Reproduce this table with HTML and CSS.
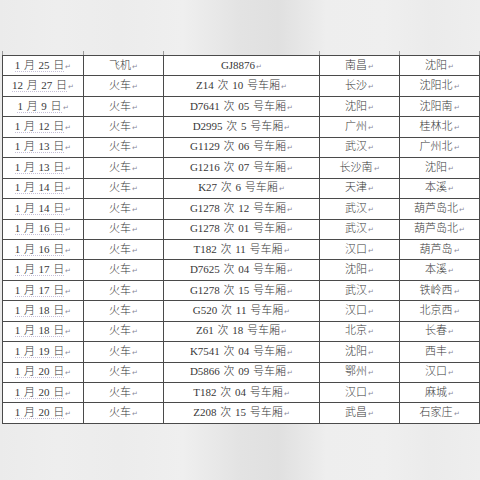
FILE: index.html
```html
<!DOCTYPE html>
<html lang="zh">
<head>
<meta charset="utf-8">
<title>行程表</title>
<link rel="stylesheet" href="styles.css">
</head>
<body>
<div class="page">
<table class="trips">
<colgroup><col class="c-date"><col class="c-mode"><col class="c-no"><col class="c-from"><col class="c-to"></colgroup>
<tbody>
<tr><td><span class="d">1 月 25 日</span><i>↵</i></td><td>飞机<i>↵</i></td><td>GJ8876<i>↵</i></td><td>南昌<i>↵</i></td><td>沈阳<i>↵</i></td></tr>
<tr><td><span class="d">12 月 27 日</span><i>↵</i></td><td>火车<i>↵</i></td><td>Z14 次 10 号车厢<i>↵</i></td><td>长沙<i>↵</i></td><td>沈阳北<i>↵</i></td></tr>
<tr><td><span class="d">1 月 9 日</span><i>↵</i></td><td>火车<i>↵</i></td><td>D7641 次 05 号车厢<i>↵</i></td><td>沈阳<i>↵</i></td><td>沈阳南<i>↵</i></td></tr>
<tr><td><span class="d">1 月 12 日</span><i>↵</i></td><td>火车<i>↵</i></td><td>D2995 次 5 号车厢<i>↵</i></td><td>广州<i>↵</i></td><td>桂林北<i>↵</i></td></tr>
<tr><td><span class="d">1 月 13 日</span><i>↵</i></td><td>火车<i>↵</i></td><td>G1129 次 06 号车厢<i>↵</i></td><td>武汉<i>↵</i></td><td>广州北<i>↵</i></td></tr>
<tr><td><span class="d">1 月 13 日</span><i>↵</i></td><td>火车<i>↵</i></td><td>G1216 次 07 号车厢<i>↵</i></td><td>长沙南<i>↵</i></td><td>沈阳<i>↵</i></td></tr>
<tr><td><span class="d">1 月 14 日</span><i>↵</i></td><td>火车<i>↵</i></td><td>K27 次 6 号车厢<i>↵</i></td><td>天津<i>↵</i></td><td>本溪<i>↵</i></td></tr>
<tr><td><span class="d">1 月 14 日</span><i>↵</i></td><td>火车<i>↵</i></td><td>G1278 次 12 号车厢<i>↵</i></td><td>武汉<i>↵</i></td><td>葫芦岛北<i>↵</i></td></tr>
<tr><td><span class="d">1 月 16 日</span><i>↵</i></td><td>火车<i>↵</i></td><td>G1278 次 01 号车厢<i>↵</i></td><td>武汉<i>↵</i></td><td>葫芦岛北<i>↵</i></td></tr>
<tr><td><span class="d">1 月 16 日</span><i>↵</i></td><td>火车<i>↵</i></td><td>T182 次 11 号车厢<i>↵</i></td><td>汉口<i>↵</i></td><td>葫芦岛<i>↵</i></td></tr>
<tr><td><span class="d">1 月 17 日</span><i>↵</i></td><td>火车<i>↵</i></td><td>D7625 次 04 号车厢<i>↵</i></td><td>沈阳<i>↵</i></td><td>本溪<i>↵</i></td></tr>
<tr><td><span class="d">1 月 17 日</span><i>↵</i></td><td>火车<i>↵</i></td><td>G1278 次 15 号车厢<i>↵</i></td><td>武汉<i>↵</i></td><td>铁岭西<i>↵</i></td></tr>
<tr><td><span class="d">1 月 18 日</span><i>↵</i></td><td>火车<i>↵</i></td><td>G520 次 11 号车厢<i>↵</i></td><td>汉口<i>↵</i></td><td>北京西<i>↵</i></td></tr>
<tr><td><span class="d">1 月 18 日</span><i>↵</i></td><td>火车<i>↵</i></td><td>Z61 次 18 号车厢<i>↵</i></td><td>北京<i>↵</i></td><td>长春<i>↵</i></td></tr>
<tr><td><span class="d">1 月 19 日</span><i>↵</i></td><td>火车<i>↵</i></td><td>K7541 次 04 号车厢<i>↵</i></td><td>沈阳<i>↵</i></td><td>西丰<i>↵</i></td></tr>
<tr><td><span class="d">1 月 20 日</span><i>↵</i></td><td>火车<i>↵</i></td><td>D5866 次 09 号车厢<i>↵</i></td><td>鄂州<i>↵</i></td><td>汉口<i>↵</i></td></tr>
<tr><td><span class="d">1 月 20 日</span><i>↵</i></td><td>火车<i>↵</i></td><td>T182 次 04 号车厢<i>↵</i></td><td>汉口<i>↵</i></td><td>麻城<i>↵</i></td></tr>
<tr><td><span class="d">1 月 20 日</span><i>↵</i></td><td>火车<i>↵</i></td><td>Z208 次 15 号车厢<i>↵</i></td><td>武昌<i>↵</i></td><td>石家庄<i>↵</i></td></tr>
</tbody>
</table>
</div>
</body>
</html>
```

FILE: styles.css
```css
html, body {
  margin: 0;
  padding: 0;
}
body {
  width: 480px;
  height: 480px;
  overflow: hidden;
  background: linear-gradient(to right, #ebebeb 0%, #eeeeee 12%, #ececec 25%, #efefef 38%, #e3e3e3 50%, #e0e0e0 58%, #eeeeee 68%, #efefef 80%, #ebebeb 90%, #eeeeee 100%);
  font-family: "Liberation Serif", "Noto Sans CJK SC", serif;
}
.page {
  padding: 55px 0 0 2px;
}
.trips {
  border-collapse: collapse;
  table-layout: fixed;
  width: 478px;
  background: #ffffff;
  color: #383838;
  font-size: 11px;
  font-weight: 300;
}
.c-date { width: 81px; }
.c-mode { width: 80px; }
.c-no { width: 156px; }
.c-from { width: 80px; }
.c-to { width: 80px; }
.trips td {
  border: 1px solid #4a4a4a;
  height: 19.44px;
  padding: 0;
  text-align: center;
  vertical-align: middle;
  line-height: 14px;
  white-space: nowrap;
  word-spacing: 1px;
}
.trips tr:first-child td {
  position: relative;
}
.trips tr:first-child td::after {
  content: "";
  position: absolute;
  right: -1px;
  top: -5px;
  width: 1px;
  height: 4px;
  background: #9a9a9a;
}
.trips tr:first-child td:first-child::before {
  content: "";
  position: absolute;
  left: -1px;
  top: -5px;
  width: 1px;
  height: 4px;
  background: #9a9a9a;
}
.trips i {
  font-style: normal;
  font-size: 7px;
  color: #8a8a9a;
  margin-left: 1px;
}
.d {
  border-bottom: 1px dotted #c4bed6;
}
```
